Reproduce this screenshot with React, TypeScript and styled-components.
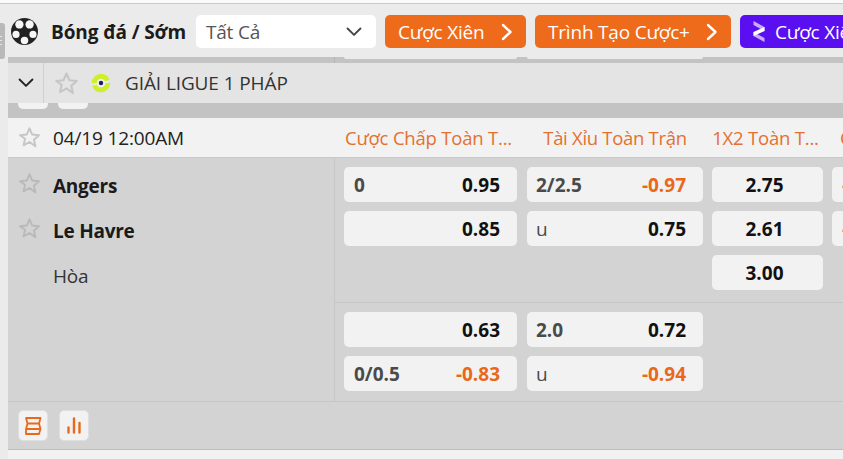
import React from "react";
import styled, { createGlobalStyle } from "styled-components";

const GlobalStyle = createGlobalStyle`
	html, body { margin: 0; padding: 0; background: #ebebeb; }
	body { font-family: "Open Sans", "Noto Sans", "Liberation Sans", sans-serif; color: #1c1c1c; }
	* { box-sizing: border-box; }
`;

const COLUMNS = "173px 177px 111px 111px";

const Page = styled.div`
	position: relative;
	width: 843px;
	height: 459px;
	overflow: hidden;
	background: #ebebeb;
`;

const TopEdge = styled.div`
	height: 4px;
	background: #fafafa;
	border-bottom: 1px solid #c9c9c9;
`;

const Grip = styled.div`
	position: absolute;
	left: 0;
	top: 23px;
	width: 5px;
	height: 36px;
	background: #b9b9b9;
	border-radius: 0 3px 3px 0;

	&::after {
		content: "";
		position: absolute;
		left: 0;
		top: 13px;
		width: 2px;
		height: 11px;
		background: repeating-linear-gradient(#e4e4e4 0 1px, transparent 1px 4px);
	}
`;

const Content = styled.div`
	margin-left: 8px;
`;

const Header = styled.header`
	display: flex;
	align-items: center;
	height: 53px;
	padding: 2px 0 0 3px;
	white-space: nowrap;
`;

const SportTitle = styled.h1`
	flex: none;
	width: 136px;
	margin: 0 9px 0 13px;
	font-size: 19px;
	font-weight: 700;
	letter-spacing: -0.1px;
`;

const FilterSelect = styled.div`
	flex: none;
	display: flex;
	align-items: center;
	justify-content: space-between;
	width: 180px;
	height: 33px;
	padding: 0 14px 0 10px;
	margin-right: 9px;
	background: #fff;
	border-radius: 5px;
	font-size: 19px;
	letter-spacing: -0.2px;
	color: #555;
`;

const PromoButton = styled.div<{ $width: number; $violet?: boolean }>`
	flex: none;
	display: flex;
	align-items: center;
	justify-content: ${(p) => (p.$violet ? "flex-start" : "space-between")};
	gap: 10px;
	width: ${(p) => p.$width}px;
	height: 33px;
	padding: 0 13px;
	margin-right: 9px;
	border-radius: 5px;
	font-size: 19px;
	letter-spacing: -0.2px;
	color: #fff;
	background: ${(p) => (p.$violet ? "#5a0ff0" : "#ed6b1b")};
`;

const ScrollBand = styled.div<{ $height: number; $left: number }>`
	display: flex;
	align-items: flex-start;
	height: ${(p) => p.$height}px;
	padding-left: ${(p) => p.$left}px;
	gap: 10px;
	background: #c4c3c4;
`;

const BandLine = styled.div`
	width: 1px;
	height: 100%;
	margin-right: -1px;
	background: #b4b4b4;
`;

const Remnant = styled.div<{ $width: number; $height: number; $tone: string }>`
	width: ${(p) => p.$width}px;
	height: ${(p) => p.$height}px;
	background: ${(p) => p.$tone};
	border-radius: 0 0 5px 5px;
`;

const LeagueRow = styled.div`
	display: flex;
	align-items: center;
	height: 40px;
	background: #e4e4e4;
`;

const CollapseCell = styled.div`
	display: flex;
	align-items: center;
	justify-content: center;
	width: 36px;
	height: 100%;
	margin-right: 10px;
	border-right: 1px solid #cfcfcf;
`;

const LeagueName = styled.span`
	margin-left: 14px;
	font-size: 19px;
	letter-spacing: -0.1px;
	color: #333;
`;

const TimeRow = styled.div`
	display: grid;
	grid-template-columns: 327px ${COLUMNS};
	column-gap: 9px;
	height: 40px;
	align-items: center;
	background: #f2f2f2;
	border-bottom: 1px solid #c8c8c8;
	white-space: nowrap;
`;

const TimeCell = styled.div`
	display: flex;
	align-items: center;
	gap: 12px;
	padding-left: 10px;
	font-size: 19px;
	letter-spacing: -0.15px;
	color: #222;
`;

const MarketTitle = styled.div<{ $align: "wide" | "mid" | "start" }>`
	padding: ${(p) => (p.$align === "start" ? "0 0 0 8px" : p.$align === "mid" ? "0 0 0 1px" : "0 4px 0 0")};
	font-size: 18.5px;
	letter-spacing: ${(p) => (p.$align === "mid" ? "-0.3px" : "-0.2px")};
	color: #e4702f;
	text-align: ${(p) => (p.$align === "start" ? "left" : "center")};
	overflow: hidden;
`;

const MatchBody = styled.div`
	display: grid;
	grid-template-columns: 327px 1fr;
	height: 243px;
	background: #d4d3d4;
`;

const Teams = styled.div`
	padding-top: 5px;
	border-right: 1px solid #c6c6c6;
`;

const TeamRow = styled.div<{ $bold?: boolean }>`
	display: flex;
	align-items: center;
	gap: 12px;
	height: 45px;
	padding-left: 10px;
	font-size: 19px;
	letter-spacing: -0.25px;
	font-weight: ${(p) => (p.$bold ? 700 : 400)};
	color: ${(p) => (p.$bold ? "#1a1a1a" : "#333")};

	svg {
		margin-top: -4px;
	}
`;

const TeamLabel = styled.span`
	margin-left: 35px;
`;

const OddsGroup = styled.div<{ $last?: boolean }>`
	display: grid;
	grid-template-columns: ${COLUMNS};
	gap: 9px;
	height: ${(p) => (p.$last ? "99px" : "144px")};
	padding: 9px 0 0 9px;
	border-top: ${(p) => (p.$last ? "1px solid #c6c6c6" : "none")};
`;

const OddsCell = styled.div<{ $align: "between" | "center" | "start" }>`
	display: flex;
	align-items: center;
	justify-content: ${(p) => (p.$align === "center" ? "center" : p.$align === "start" ? "flex-start" : "space-between")};
	height: 35px;
	padding: ${(p) => (p.$align === "center" ? "0 6px 0 0" : "0 17px 0 10px")};
	background: #f2f2f2;
	border-radius: 5px;
	font-size: 19px;
	letter-spacing: 0;
`;

const OddsColumn = styled.div`
	display: flex;
	flex-direction: column;
	gap: 9px;

	&:nth-child(2) {
		padding-left: 1px;
	}

	&:nth-child(2) ${OddsCell} {
		padding-left: 9px;
	}
`;

const Line = styled.span<{ $bold?: boolean }>`
	color: #4a4a4a;
	font-weight: ${(p) => (p.$bold ? 700 : 400)};
`;

const Price = styled.span<{ $down?: boolean; $auto?: boolean }>`
	margin-left: ${(p) => (p.$auto ? "auto" : 0)};
	font-weight: 700;
	color: ${(p) => (p.$down ? "#e8691c" : "#111")};
`;

const Footer = styled.div`
	display: flex;
	align-items: center;
	gap: 11px;
	height: 49px;
	padding-left: 10px;
	background: #d4d3d4;
	border-top: 1px solid #c6c6c6;
	border-bottom: 1px solid #bdbdbd;
`;

const ToolButton = styled.div`
	display: flex;
	align-items: center;
	justify-content: center;
	width: 30px;
	height: 31px;
	background: #f2f2f2;
	border: 1px solid #dfdfdf;
	border-radius: 5px;
`;

const NextRow = styled.div`
	height: 10px;
	background: #f2f2f2;
`;

const Star = ({ size = 23, tone = "#c6c6c6" }: { size?: number; tone?: string }) => (
	<svg width={size} height={size} viewBox="0 0 24 24" style={{ flex: "none" }}>
		<path
			d="M12 2.4l2.9 6.5 7 .7-5.3 4.7 1.6 6.9L12 16.7l-6.2 3.5 1.6-6.9L2.100 9.600l7-.7z"
			fill="none"
			stroke={tone}
			strokeWidth="2"
			strokeLinejoin="round"
		/>
	</svg>
);

const Chevron = ({ color = "#222", width = 16 }: { color?: string; width?: number }) => (
	<svg width={width} height={width * 0.62} viewBox="0 0 16 10" style={{ flex: "none" }}>
		<path d="M1.500 1.500L8 8l6.500-6.500" fill="none" stroke={color} strokeWidth="1.900" strokeLinecap="round" strokeLinejoin="round" />
	</svg>
);

const ArrowRight = () => (
	<svg width="12" height="18" viewBox="0 0 12 18" style={{ flex: "none" }}>
		<path d="M2 2l7.500 7L2 16" fill="none" stroke="#fff" strokeWidth="2.400" strokeLinecap="round" strokeLinejoin="round" />
	</svg>
);

const SoccerBall = () => (
	<svg width="27" height="27" viewBox="0 0 28 28" style={{ flex: "none" }}>
		<circle cx="14" cy="14" r="14" fill="#222" />
		<g fill="#f6f6f6">
			<circle cx="19.300" cy="6.700" r="4.300" />
			<circle cx="8.700" cy="6.700" r="4.300" />
			<circle cx="22.800" cy="17" r="3.700" />
			<circle cx="5.200" cy="17" r="3.700" />
			<circle cx="14" cy="23.300" r="3.900" />
		</g>
		<path d="M14 9.500l4.700 3.400-1.800 5.500h-5.800l-1.800-5.500z" fill="#222" />
	</svg>
);

const LeagueLogo = () => (
	<svg width="20" height="20" viewBox="0 0 20 20" style={{ flex: "none", marginLeft: 12 }}>
		<circle cx="10" cy="10" r="6.800" fill="#f0f0f0" stroke="#cdf02a" strokeWidth="5" strokeDasharray="19 2 19 3" />
		<circle cx="10" cy="10" r="2.200" fill="#1b2450" />
	</svg>
);

const BoostMark = () => (
	<svg width="12" height="21" viewBox="0 0 12 21" style={{ flex: "none" }}>
		<path d="M0.500 0L11.500 6v4L.5 4zM.5 11l11 6v4l-11-6z" fill="#c9aaf8" />
		<path d="M11.500 6L.5 11v4l11-5z" fill="#fff" />
	</svg>
);

const LayersIcon = () => (
	<svg width="18" height="20" viewBox="0 0 18 20">
		<path
			d="M2 2h14.500L15 7.500H3.500zM3.500 7.500H15l1.500 5.500H2zM2 13h14.500L15 18H2z"
			fill="none"
			stroke="#e8691c"
			strokeWidth="1.800"
			strokeLinejoin="round"
		/>
	</svg>
);

const BarsIcon = () => (
	<svg width="16" height="17" viewBox="0 0 16 17">
		<path d="M2.500 10.500v5M8 1.500v14M13.500 6v9.500" stroke="#e8691c" strokeWidth="2.400" strokeLinecap="round" fill="none" />
	</svg>
);

type Odd = { line?: string; lineBold?: boolean; price: string; down?: boolean };
type OddColumn = { cells: Odd[]; align: "between" | "center" | "start" };

const upperOdds: OddColumn[] = [
	{ align: "between", cells: [{ line: "0", lineBold: true, price: "0.95" }, { price: "0.85" }] },
	{
		align: "between",
		cells: [
			{ line: "2/2.5", lineBold: true, price: "-0.97", down: true },
			{ line: "u", price: "0.75" },
		],
	},
	{ align: "center", cells: [{ price: "2.75" }, { price: "2.61" }, { price: "3.00" }] },
	{ align: "start", cells: [{ price: "-0.90", down: true }, { price: "-0.80", down: true }] },
];

const lowerOdds: OddColumn[] = [
	{ align: "between", cells: [{ price: "0.63" }, { line: "0/0.5", lineBold: true, price: "-0.83", down: true }] },
	{
		align: "between",
		cells: [
			{ line: "2.0", lineBold: true, price: "0.72" },
			{ line: "u", price: "-0.94", down: true },
		],
	},
];

function renderOdds(columns: OddColumn[]) {
	return columns.map((col, i) => (
		<OddsColumn key={i}>
			{col.cells.map((odd, j) => (
				<OddsCell key={j} $align={col.align}>
					{odd.line && <Line $bold={odd.lineBold}>{odd.line}</Line>}
					<Price $down={odd.down} $auto={col.align === "between"}>
						{odd.price}
					</Price>
				</OddsCell>
			))}
		</OddsColumn>
	));
}

export default function App() {
	return (
		<Page>
			<GlobalStyle />
			<TopEdge />
			<Grip />
			<Content>
				<Header>
					<SoccerBall />
					<SportTitle>Bóng đá / Sớm</SportTitle>
					<FilterSelect>
						Tất Cả
						<Chevron color="#444" />
					</FilterSelect>
					<PromoButton $width={141}>
						Cược Xiên
						<ArrowRight />
					</PromoButton>
					<PromoButton $width={196}>
						Trình Tạo Cược+
						<ArrowRight />
					</PromoButton>
					<PromoButton $width={150} $violet>
						<BoostMark />
						Cược Xiên
					</PromoButton>
				</Header>
				<ScrollBand $height={6} $left={326}>
					<BandLine />
					<Remnant $width={173} $height={2} $tone="#ebebeb" />
					<Remnant $width={176} $height={2} $tone="#ebebeb" />
				</ScrollBand>
				<LeagueRow>
					<CollapseCell>
						<Chevron />
					</CollapseCell>
					<Star size={25} />
					<LeagueLogo />
					<LeagueName>GIẢI LIGUE 1 PHÁP</LeagueName>
				</LeagueRow>
				<ScrollBand $height={15} $left={10}>
					<Remnant $width={30} $height={6} $tone="#f2f2f2" />
					<Remnant $width={30} $height={6} $tone="#f2f2f2" />
				</ScrollBand>
				<TimeRow>
					<TimeCell>
						<Star />
						04/19 12:00AM
					</TimeCell>
					<MarketTitle $align="wide">Cược Chấp Toàn T...</MarketTitle>
					<MarketTitle $align="mid">Tài Xỉu Toàn Trận</MarketTitle>
					<MarketTitle $align="wide">1X2 Toàn T...</MarketTitle>
					<MarketTitle $align="start">Cược</MarketTitle>
				</TimeRow>
				<MatchBody>
					<Teams>
						<TeamRow $bold>
							<Star tone="#b9b9b9" />
							Angers
						</TeamRow>
						<TeamRow $bold>
							<Star tone="#b9b9b9" />
							Le Havre
						</TeamRow>
						<TeamRow>
							<TeamLabel>Hòa</TeamLabel>
						</TeamRow>
					</Teams>
					<div>
						<OddsGroup>{renderOdds(upperOdds)}</OddsGroup>
						<OddsGroup $last>{renderOdds(lowerOdds)}</OddsGroup>
					</div>
				</MatchBody>
				<Footer>
					<ToolButton>
						<LayersIcon />
					</ToolButton>
					<ToolButton>
						<BarsIcon />
					</ToolButton>
				</Footer>
				<NextRow />
			</Content>
		</Page>
	);
}
